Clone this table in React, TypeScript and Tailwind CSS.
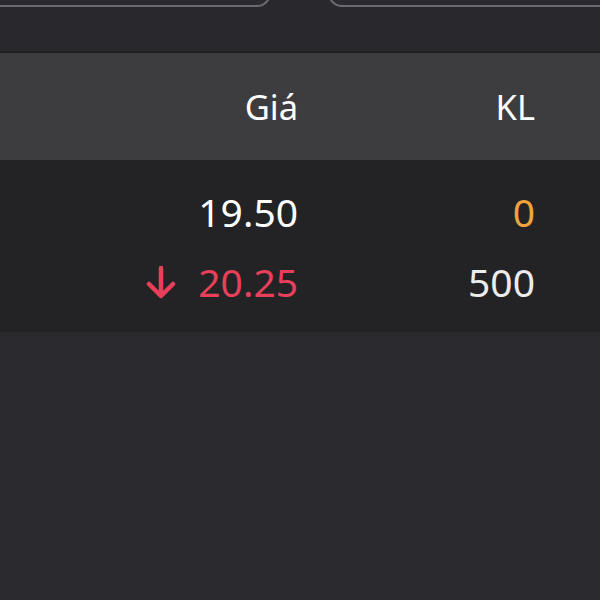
export default function App() {
  return (
    <main
      className="w-[600px] h-[600px] overflow-hidden bg-[#29282d] flex flex-col text-white"
      style={{ fontFamily: '"Noto Sans", "Open Sans", sans-serif' }}
    >
      {/* top tabs, cut off by the window */}
      <div className="relative h-[51px] shrink-0 flex justify-between">
        <div className="w-[291px] h-[20px] -mt-[13px] -ml-[20px] rounded-b-[14px] border-b-2 border-r-2 border-[#6a6a70] bg-[#2b2a30]" />
        <div className="w-[292px] h-[20px] -mt-[13px] -mr-[20px] rounded-b-[14px] border-b-2 border-l-2 border-[#6a6a70] bg-[#2b2a30]" />
      </div>

      <div className="h-[2px] bg-[#202023]" />
      <div className="h-[107px] bg-[#3d3d40] flex items-center text-[34.5px]">
        <div className="w-[298px] text-right">Giá</div>
        <div className="w-[237px] text-right">KL</div>
      </div>

      <div className="h-[172px] bg-[#232326] flex flex-col pt-[17px] text-[39px]">
        <div className="h-[70px] flex items-center">
          <div className="w-[298px] text-right">19.50</div>
          <div className="w-[237px] text-right text-[#f0a33c]">0</div>
        </div>
        <div className="h-[70px] flex items-center">
          <div className="w-[298px] flex justify-end items-center gap-[21px] text-[#e8405a]">
            <svg width="32" height="34" viewBox="0 0 32 34" fill="none" stroke="currentColor" strokeWidth="4.5" strokeLinecap="round" strokeLinejoin="round">
              <path d="M16 3v27M4 19l12 12 12-12" />
            </svg>
            <span>20.25</span>
          </div>
          <div className="w-[237px] text-right text-[#ececec]">500</div>
        </div>
      </div>

      <div className="flex-1 bg-[#2a292e]" />
    </main>
  );
}
